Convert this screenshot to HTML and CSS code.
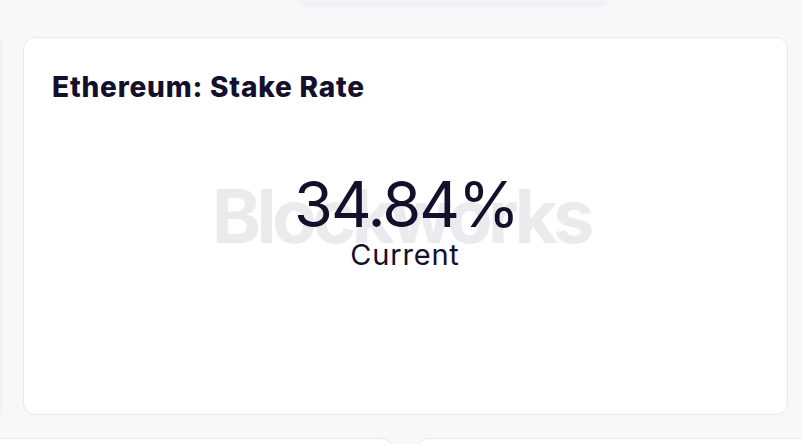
FILE: index.html
```html
<!DOCTYPE html>
<html lang="en">
<head>
<meta charset="utf-8">
<title>Ethereum: Stake Rate</title>
<link rel="stylesheet" href="styles.css">
</head>
<body>
<div class="page">
  <div class="top-strip"><div class="top-pill"></div></div>
  <div class="row">
    <div class="side-card"></div>
    <section class="card">
      <h2 class="card-title">Ethereum: Stake Rate</h2>
      <div class="metric">
        <div class="watermark" aria-hidden="true">Blockworks</div>
        <div class="metric-value">34.84%</div>
        <div class="metric-label">Current</div>
      </div>
    </section>
  </div>
  <div class="bottom-row">
    <div class="bottom-card left"></div>
    <div class="bottom-card right"></div>
  </div>
</div>
</body>
</html>
```

FILE: styles.css
```css
* { box-sizing: border-box; }
html, body { margin: 0; padding: 0; }
body {
  background: #f8f8f8;
  font-family: Inter, "Noto Sans", "Liberation Sans", sans-serif;
  color: #12102b;
  width: 802px;
  height: 444px;
  overflow: hidden;
}
.page {
  display: flex;
  flex-direction: column;
  height: 444px;
  overflow: hidden;
}
.top-strip {
  height: 37px;
  flex-shrink: 0;
  padding-left: 300px;
}
.top-pill {
  width: 308px;
  height: 7px;
  background: #f1f1f5;
  border-radius: 0 0 6px 6px;
  filter: blur(1px);
}
.row {
  display: flex;
  gap: 21px;
  height: 378px;
  flex-shrink: 0;
}
.side-card {
  width: 2px;
  margin-top: 3px;
  background: #f7f7f7;
  border-right: 1px solid #ececec;
  border-top-right-radius: 10px;
  flex-shrink: 0;
}
.card {
  width: 765px;
  flex-shrink: 0;
  background: #ffffff;
  border: 1px solid #e8e8e8;
  border-radius: 12px;
  padding: 32px 28px 0 28px;
  display: flex;
  flex-direction: column;
}
.card-title {
  margin: 0;
  font-size: 28px;
  font-weight: 800;
  line-height: 34px;
  letter-spacing: 0.8px;
}
.metric {
  position: relative;
  display: flex;
  flex-direction: column;
  align-items: center;
  margin-top: 68px;
  margin-right: 1px;
}
.watermark {
  position: absolute;
  top: 7px;
  left: 50%;
  transform: translateX(-50%);
  font-size: 74px;
  font-weight: 700;
  line-height: 1;
  color: #ebebee;
  letter-spacing: -4.6px;
  padding-right: 8px;
  white-space: nowrap;
  z-index: 0;
}
.metric-value, .metric-label { position: relative; z-index: 1; }
.metric-value {
  font-size: 63px;
  font-weight: 400;
  line-height: 64px;
  letter-spacing: -2px;
  padding-left: 2px;
}
.metric-label {
  font-size: 29px;
  line-height: 32px;
  letter-spacing: 0.8px;
  margin-top: 3px;
}
.bottom-row {
  display: flex;
  gap: 26px;
  margin-top: 23px;
  margin-left: -100px;
  flex-shrink: 0;
}
.bottom-card {
  height: 40px;
  flex-shrink: 0;
  background: #ffffff;
  border: 1px solid #e8e8e8;
  border-radius: 10px;
}
.bottom-card.left { width: 492px; }
.bottom-card.right { width: 500px; }
```
